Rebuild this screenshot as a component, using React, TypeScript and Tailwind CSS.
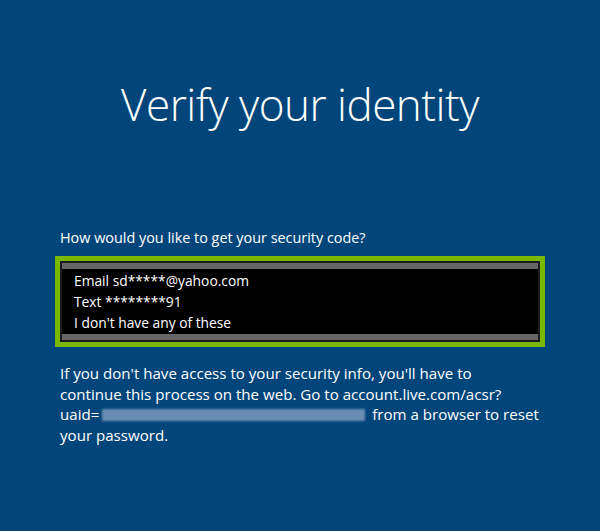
export default function App() {
  return (
    <div
      className="flex h-[531px] w-[600px] flex-col bg-[#01457a] text-white"
      style={{ fontFamily: '"Open Sans", "Noto Sans", sans-serif' }}
    >
      <h1 className="mt-[74px] text-center text-[44px] font-light leading-[60px] tracking-[-0.5px]">
        Verify your identity
      </h1>

      <div className="mt-[94px] flex flex-col px-[55px]">
        <p className="pl-[5px] text-[14.4px] leading-[20px]">
          How would you like to get your security code?
        </p>

        <div className="mt-[8px] border-[5px] border-[#7ab800]">
          <div className="border-2 border-[#1c1c1c] bg-black">
            <div className="h-[6px] bg-[#666666]" />
            <ul className="flex flex-col pl-[12px] text-[13.8px] leading-[21px]">
              <li className="pt-[1px]">Email sd*****@yahoo.com</li>
              <li>Text ********91</li>
              <li className="pb-[1px]">I don't have any of these</li>
            </ul>
            <div className="h-[6px] bg-[#666666]" />
          </div>
        </div>

        <p className="mt-[16px] whitespace-nowrap pl-[5px] text-[15.1px] leading-[20.7px]">
          If you don't have access to your security info, you'll have to
          <br />
          continue this process on the web. Go to account.live.com/acsr?
          <br />
          uaid=
          <span className="mx-[3px] inline-block h-[12px] w-[263px] bg-[#6a8db4] align-[-1px] blur-[1px]" />{" "}
          from a browser to reset
          <br />
          your password.
        </p>
      </div>
    </div>
  )
}
